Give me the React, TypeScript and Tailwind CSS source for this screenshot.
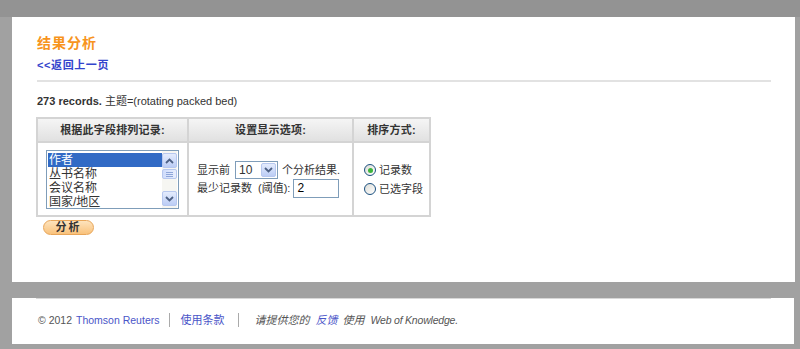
import React from "react";

const font = { fontFamily: '"Liberation Sans", Arial, "Noto Sans CJK SC", sans-serif' };

function ScrollBtn({ up }: { up: boolean }) {
  return (
    <div className="w-[15px] h-[15px] rounded-[2px] border border-[#b7c8ef] bg-gradient-to-b from-[#e4ecfd] to-[#bccdf5] flex items-center justify-center">
      <svg width="9" height="6" viewBox="0 0 9 6">
        <path d={up ? "M1 5 L4.5 1.5 L8 5" : "M1 1 L4.5 4.5 L8 1"} stroke="#4d6185" strokeWidth="1.8" fill="none" />
      </svg>
    </div>
  );
}

function Radio({ checked }: { checked: boolean }) {
  return (
    <span className="w-[12px] h-[12px] rounded-full border border-[#1c5180] bg-gradient-to-br from-[#dcdcd6] to-white flex items-center justify-center">
      {checked && <span className="w-[5px] h-[5px] rounded-full bg-[#3cb43c]" />}
    </span>
  );
}

export default function App() {
  return (
    <div className="w-[800px] h-[349px] bg-[#a1a1a1] overflow-hidden" style={font}>
      <div className="h-[17px] bg-[#939393]" />
      <div className="ml-[12px] w-[783px] h-[265px] bg-white pl-[25px] pt-[18px]">
        <div className="text-[14px] font-bold text-[#f7941d] leading-[17px] tracking-[1px]">结果分析</div>
        <div className="mt-[7px] text-[11px] font-bold text-[#3344cc] leading-[13px] tracking-[0.6px]">&lt;&lt;返回上一页</div>
        <div className="mt-[8px] w-[734px] h-[2px] bg-[#e2e2e2]" />
        <div className="mt-[13px] text-[11px] text-[#333] leading-[13px]">
          <span className="font-bold">273 records.</span> 主题=(rotating packed bed)
        </div>
        <table className="mt-[9px] ml-[-1px] border-collapse border-2 border-[#d4d4d4] text-[11px] text-[#333]">
          <thead>
            <tr className="h-[24px] bg-gradient-to-b from-[#f6f6f6] to-[#e0e0e0]">
              <th className="w-[151px] border-2 border-[#d4d4d4] font-bold text-center tracking-[0.2px]">根据此字段排列记录:</th>
              <th className="w-[165px] border-2 border-[#d4d4d4] font-bold text-center tracking-[0.2px]">设置显示选项:</th>
              <th className="w-[77px] border-2 border-[#d4d4d4] font-bold text-center tracking-[0.2px]">排序方式:</th>
            </tr>
          </thead>
          <tbody>
            <tr className="h-[74px]">
              <td className="border-2 border-[#d4d4d4] align-top pl-[8px] pt-[7px]">
                <div className="w-[133px] h-[59px] border border-[#7f9db9] flex bg-white">
                  <div className="flex-1 pl-[1px] pt-[2px] text-[12px] leading-[14px] text-[#333]">
                    <div className="bg-[#316ac5] text-white pl-[1px]">作者</div>
                    <div className="pl-[1px]">丛书名称</div>
                    <div className="pl-[1px]">会议名称</div>
                    <div className="pl-[1px]">国家/地区</div>
                  </div>
                  <div className="w-[15px] mr-[1px] py-[2px] bg-[#f6f6f2] flex flex-col justify-between">
                    <ScrollBtn up />
                    <div className="flex-1 flex items-start pt-[1px]">
                      <div className="w-[15px] h-[10px] rounded-[2px] border border-[#b7c8ef] bg-gradient-to-r from-[#cfdcfb] to-[#e8eefd] flex flex-col justify-center items-center gap-[1px]">
                        <div className="w-[7px] h-[1px] bg-[#8ea6d9]" />
                        <div className="w-[7px] h-[1px] bg-[#8ea6d9]" />
                        <div className="w-[7px] h-[1px] bg-[#8ea6d9]" />
                      </div>
                    </div>
                    <ScrollBtn up={false} />
                  </div>
                </div>
              </td>
              <td className="border-2 border-[#d4d4d4] align-middle pl-[8px] pt-[1px]">
                <div className="flex items-center h-[18px]">
                  <span>显示前</span>
                  <div className="ml-[5px] w-[43px] h-[18px] border border-[#7f9db9] flex items-center bg-white">
                    <span className="flex-1 pl-[3px] text-[12px] text-[#333]">10</span>
                    <div className="w-[15px] h-[14px] mr-[1px] rounded-[2px] border border-[#b7c8ef] bg-gradient-to-b from-[#e4ecfd] to-[#bccdf5] flex items-center justify-center">
                      <svg width="9" height="6" viewBox="0 0 9 6">
                        <path d="M1 1 L4.5 4.5 L8 1" stroke="#4d6185" strokeWidth="1.8" fill="none" />
                      </svg>
                    </div>
                  </div>
                  <span className="ml-[4px]">个分析结果.</span>
                </div>
                <div className="flex items-center h-[19px]">
                  <span>最少记录数</span>
                  <span className="ml-[6px]">(阈值):</span>
                  <div className="ml-[3px] w-[46px] h-[19px] border border-[#7f9db9] bg-white pl-[3px] text-[12px] leading-[17px] text-black">2</div>
                </div>
              </td>
              <td className="border-2 border-[#d4d4d4] align-middle pl-[10px] pt-[1px]">
                <div className="flex items-center gap-[3px] h-[19px]"><Radio checked /><span>记录数</span></div>
                <div className="flex items-center gap-[3px] h-[19px]"><Radio checked={false} /><span>已选字段</span></div>
              </td>
            </tr>
          </tbody>
        </table>
        <div className="mt-[3px] ml-[6px] w-[51px] h-[15px] rounded-full border border-[#e8a65a] bg-gradient-to-b from-[#fde3bd] to-[#f9c27b] flex items-center justify-center text-[11px] font-bold text-[#333] tracking-[2px]">
          分析
        </div>
      </div>
      <div className="h-[16px]" />
      <div className="ml-[12px] w-[782px] h-[46px] bg-white">
        <div className="ml-[24px] w-[735px] h-[1px] bg-[#d8d8d8]" />
        <div className="flex items-center pl-[26px] pt-[14px] text-[10.5px] text-[#555] leading-[13px]">
          <span>© 2012</span>
          <span className="ml-[4px] text-[#4a55c8]">Thomson Reuters</span>
          <span className="ml-[10px] w-[1px] h-[14px] bg-[#aaa]" />
          <span className="ml-[10px] text-[11px] text-[#4a55c8]">使用条款</span>
          <span className="ml-[14px] w-[1px] h-[14px] bg-[#aaa]" />
          <span className="ml-[15px] italic text-[11px]">请提供您的</span>
          <span className="italic ml-[6px] text-[11px] text-[#4a55c8]">反馈</span>
          <span className="italic ml-[5px] text-[11px]">使用</span>
          <span className="italic ml-[6px] tracking-[-0.2px]">Web of Knowledge.</span>
        </div>
      </div>
    </div>
  );
}
